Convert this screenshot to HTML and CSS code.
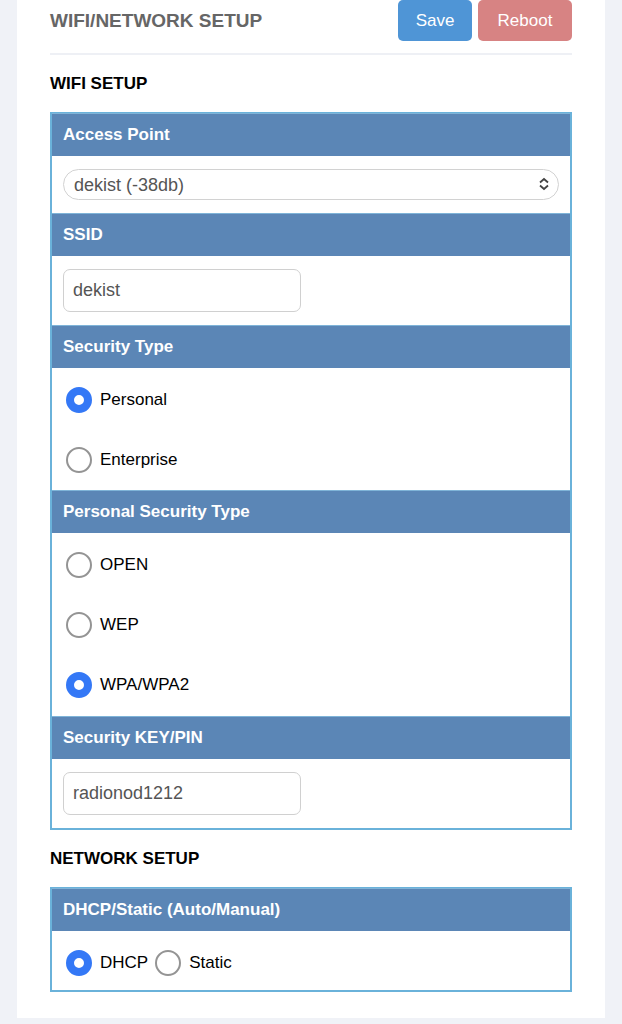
FILE: index.html
```html
<!DOCTYPE html>
<html lang="en">

<head>
  <meta charset="UTF-8" />
  <meta name="viewport" content="width=device-width, initial-scale=1.0" />
  <title>WiFi/Network Setup</title>
  <link rel="stylesheet" href="styles.css">
</head>

<body>
  <div class="card">
    <!-- Cabecalho -->
    <div class="topo">
      <h1>WIFI/NETWORK SETUP</h1>
      <div class="botoes">
        <button class="botao botaoSalvar" type="button">Save</button>
        <button class="botao botaoReiniciar" type="button">Reboot</button>
      </div>
    </div>

    <h2>WIFI SETUP</h2>

    <form class="painel">
      <div class="cabecalho">Access Point</div>
      <div class="corpo corpoCampo">
        <div class="seletor">
          <select name="ap">
            <option>dekist (-38db)</option>
          </select>
          <svg class="setas" width="14" height="14" viewBox="0 0 14 14">
            <path d="M3 5.5 L7 2 L11 5.5 M3 8.5 L7 12 L11 8.5" fill="none" stroke="#444" stroke-width="1.8" />
          </svg>
        </div>
      </div>

      <div class="cabecalho">SSID</div>
      <div class="corpo corpoCampo">
        <input class="campo" type="text" name="ssid" value="dekist" />
      </div>

      <div class="cabecalho">Security Type</div>
      <div class="corpo corpoOpcoes">
        <label class="opcao"><input type="radio" name="tipo" checked /> Personal</label>
        <label class="opcao"><input type="radio" name="tipo" /> Enterprise</label>
      </div>

      <div class="cabecalho">Personal Security Type</div>
      <div class="corpo corpoOpcoes corpoTres">
        <label class="opcao"><input type="radio" name="pessoal" /> OPEN</label>
        <label class="opcao"><input type="radio" name="pessoal" /> WEP</label>
        <label class="opcao"><input type="radio" name="pessoal" checked /> WPA/WPA2</label>
      </div>

      <div class="cabecalho">Security KEY/PIN</div>
      <div class="corpo corpoCampo">
        <input class="campo" type="text" name="chave" value="radionod1212" />
      </div>
    </form>

    <h2>NETWORK SETUP</h2>

    <form class="painel">
      <div class="cabecalho">DHCP/Static (Auto/Manual)</div>
      <div class="corpo corpoLinha">
        <label class="opcao"><input type="radio" name="rede" checked /> DHCP</label>
        <label class="opcao"><input type="radio" name="rede" /> Static</label>
      </div>
    </form>
  </div>
</body>

</html>
```

FILE: styles.css
```css
body {
  margin: 0;
  background-color: #f0f2f7;
  font-family: "Liberation Sans", Arial, Helvetica, sans-serif;
}

.card {
  margin: 0 17px 7px 17px;
  padding: 0 33px 26px 33px;
  background-color: #fff;
}

.topo {
  display: flex;
  justify-content: space-between;
  align-items: center;
  height: 41px;
  padding-bottom: 12px;
  border-bottom: 2px solid #eef0f5;
}

h1 {
  margin: 0;
  font-size: 19px;
  font-weight: bold;
  color: #666;
}

.botoes {
  display: flex;
  gap: 6px;
  align-self: flex-start;
}

.botao {
  height: 41px;
  border: none;
  border-radius: 5px;
  color: #fff;
  font-family: "Liberation Sans", Arial, sans-serif;
  font-size: 17px;
}

.botaoSalvar {
  width: 74px;
  background-color: #4f95d6;
}

.botaoReiniciar {
  width: 94px;
  background-color: #d78383;
}

h2 {
  margin: 0;
  padding: 19px 0 18px 0;
  font-size: 17px;
  font-weight: bold;
  color: #000;
}

.painel {
  border: 2px solid #6ab2da;
  border-top-width: 1px;
}

.cabecalho {
  height: 42px;
  line-height: 42px;
  padding: 0 11px;
  background-color: #5b86b6;
  border-top: 1px solid #7fb4d8;
  color: #fff;
  font-size: 17px;
  font-weight: bold;
}

.corpo {
  padding: 0 11px;
}

.corpoCampo {
  padding-top: 13px;
  padding-bottom: 13px;
}

.seletor {
  position: relative;
}

.seletor select {
  display: block;
  width: 100%;
  height: 31px;
  padding: 0 10px;
  border: 1.5px solid #d2d2d2;
  border-radius: 16px;
  background-color: #fff;
  color: #555;
  font-family: "Liberation Sans", Arial, sans-serif;
  font-size: 18px;
  appearance: none;
  -webkit-appearance: none;
}

.setas {
  position: absolute;
  right: 8px;
  top: 8px;
}

.campo {
  display: block;
  box-sizing: border-box;
  width: 238px;
  height: 43px;
  padding: 0 9px;
  border: 1.5px solid #d0d0d0;
  border-radius: 7px;
  color: #555;
  font-family: "Liberation Sans", Arial, sans-serif;
  font-size: 18px;
}

.corpoOpcoes {
  display: flex;
  flex-direction: column;
  padding-top: 2px;
}

.corpoTres {
  padding-bottom: 1px;
}

.opcao {
  display: flex;
  align-items: center;
  gap: 8px;
  height: 60px;
  font-size: 17px;
  color: #000;
}

.corpoLinha {
  display: flex;
  align-items: center;
  gap: 7px;
  height: 54px;
  padding-top: 5px;
}

.corpoLinha .opcao {
  height: auto;
}

input[type="radio"] {
  appearance: none;
  -webkit-appearance: none;
  box-sizing: border-box;
  width: 26px;
  height: 26px;
  margin: 0 0 0 3px;
  border: 2px solid #949494;
  border-radius: 50%;
  background-color: #fff;
}

input[type="radio"]:checked {
  border: 8px solid #3478f6;
}

.corpoLinha .opcao + .opcao input[type="radio"] {
  margin-left: 0;
}
```
